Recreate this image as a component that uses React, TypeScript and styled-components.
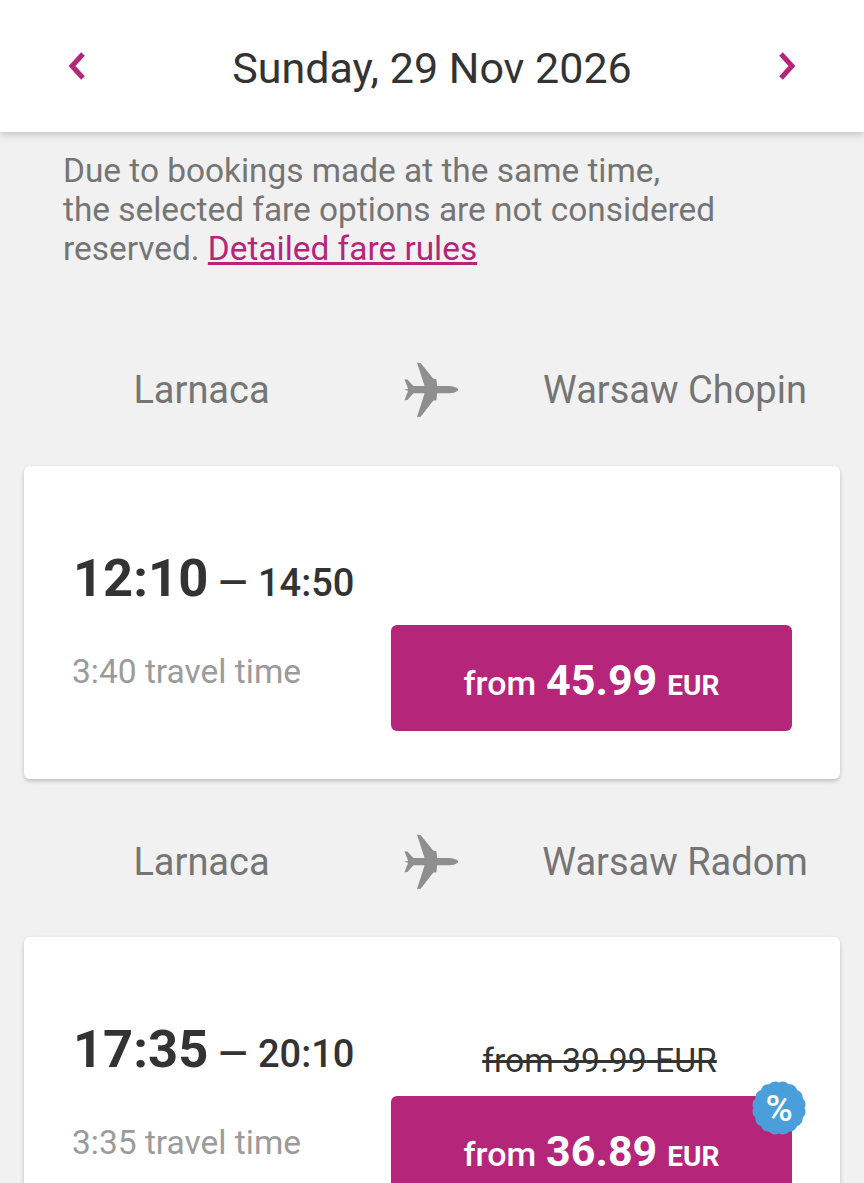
import React from "react";
import styled, { createGlobalStyle } from "styled-components";

const Global = createGlobalStyle`
  html, body { margin: 0; padding: 0; height: 1183px; overflow: hidden; background: #f1f1f1; }
  body { font-family: Roboto, "Liberation Sans", sans-serif; }
`;
const Page = styled.div`
  width: 864px;
  display: flex;
  flex-direction: column;
`;
const Header = styled.header`
  height: 132px;
  background: #fff;
  box-shadow: 0 2px 8px rgba(0, 0, 0, 0.22);
  display: flex;
  align-items: center;
  justify-content: space-between;
  padding: 0 66px;
  position: relative;
`;
const NavIcon = styled.svg`
  width: 20px;
  height: 30px;
  margin-top: -1px;
  fill: none;
  stroke: #b5267b;
  stroke-width: 5;
  stroke-linejoin: miter;
`;
const DateTitle = styled.h1`
  margin: 4px 0 0;
  font-size: 43px;
  font-weight: 400;
  color: #333;
`;
const Notice = styled.p`
  margin: 0;
  padding: 19px 63px 0;
  font-size: 33.4px;
  line-height: 39px;
  font-weight: 400;
  color: #757575;
`;
const RuleLink = styled.a`
  color: #b5267b;
  text-decoration: underline;
`;
const Route = styled.div<{ $top: number; $gap: number }>`
  display: grid;
  grid-template-columns: 403px 57px 1fr;
  align-items: center;
  height: 56px;
  margin-top: ${(p) => p.$top}px;
  margin-bottom: ${(p) => p.$gap}px;
  font-size: 38px;
  color: #757575;
`;
const City = styled.div<{ $right?: boolean }>`
  text-align: center;
  padding-left: ${(p) => (p.$right ? "26px" : "0")};
  white-space: nowrap;
`;
const Plane = styled.svg`
  width: 57px;
  height: 56px;
  fill: #8f8f8f;
`;
const Card = styled.section`
  margin: 0 24px;
  height: 313px;
  box-sizing: border-box;
  flex: none;
  background: #fff;
  border-radius: 6px;
  box-shadow: 0 2px 4px rgba(0, 0, 0, 0.22);
  display: flex;
  justify-content: space-between;
  padding: 0 48px 48px;
`;
const Times = styled.div`
  display: flex;
  flex-direction: column;
  padding-top: 77px;
  padding-left: 1px;
`;
const TimeRow = styled.div`
  display: flex;
  align-items: baseline;
  height: 70px;
  color: #333;
`;
const Depart = styled.span`
  font-size: 52.5px;
  font-weight: 700;
  line-height: 70px;
`;
const Arrive = styled.span`
  font-size: 38px;
  font-weight: 500;
  margin-left: 10px;
  word-spacing: 1px;
`;
const Travel = styled.div`
  margin-top: 39px;
  margin-left: -1px;
  font-size: 33.5px;
  line-height: 40px;
  color: #9b9b9b;
`;
const Fares = styled.div`
  width: 401px;
  display: flex;
  flex-direction: column;
  justify-content: flex-end;
  align-items: center;
`;
const OldPrice = styled.div`
  font-size: 33.7px;
  line-height: 40px;
  margin: 0 0 15px 16px;
  color: #333;
  text-decoration: line-through;
`;
const PriceButton = styled.button`
  position: relative;
  width: 401px;
  height: 106px;
  flex: none;
  border: 0;
  border-radius: 6px;
  background: #b5267b;
  color: #fff;
  font-family: inherit;
  display: flex;
  align-items: baseline;
  justify-content: center;
  padding: 30px 0 0;
  font-size: 34px;
  font-weight: 500;
`;
const Amount = styled.strong`
  font-size: 43px;
  font-weight: 700;
  margin: 0 10px;
`;
const Currency = styled.span`
  font-size: 28px;
  font-weight: 700;
`;
const Badge = styled.div`
  position: absolute;
  right: -14px;
  top: -15px;
  width: 54px;
  height: 54px;
  display: flex;
  align-items: center;
  justify-content: center;
  color: #fff;
  font-size: 37px;
  font-weight: 500;
`;
const BadgeShape = styled.svg`
  position: absolute;
  inset: 0;
  fill: #4a9fda;
`;
const BadgeText = styled.span`
  position: relative;
`;

const scallop = (() => {
  const n = 16;
  let d = "";
  for (let i = 0; i < n; i++) {
    const a0 = (i / n) * Math.PI * 2;
    const a1 = ((i + 0.5) / n) * Math.PI * 2;
    const a2 = ((i + 1) / n) * Math.PI * 2;
    const pt = (a: number, r: number) => `${(27 + r * Math.cos(a)).toFixed(2)} ${(27 + r * Math.sin(a)).toFixed(2)}`;
    if (i === 0) d += `M${pt(a0, 25.6)}`;
    d += `Q${pt(a1, 28.8)} ${pt(a2, 25.6)}`;
  }
  return d + "Z";
})();

const PlaneIcon = () => (
  <Plane viewBox="70 66 170 170" aria-hidden="true">
    <path d="M236 150C236 145 222 139 204 139L172 139L170 118L160 116L122 69L111 68L134 139L100 139L82 119L73 118L84 147L72 150L84 153L73 182L82 181L100 161L134 161L111 233L122 232L160 184L170 182L172 161L204 161C222 161 236 155 236 150Z" />
  </Plane>
);

const Flight = ({ dep, arr, travel, price, old }: { dep: string; arr: string; travel: string; price: string; old?: string }) => (
  <Card>
    <Times>
      <TimeRow>
        <Depart>{dep}</Depart>
        <Arrive>— {arr}</Arrive>
      </TimeRow>
      <Travel>{travel}</Travel>
    </Times>
    <Fares>
      {old && <OldPrice>from {old} EUR</OldPrice>}
      <PriceButton>
        from<Amount>{price}</Amount><Currency>EUR</Currency>
        {old && (
          <Badge>
            <BadgeShape viewBox="0 0 54 54"><path d={scallop} /></BadgeShape>
            <BadgeText>%</BadgeText>
          </Badge>
        )}
      </PriceButton>
    </Fares>
  </Card>
);

export default function App() {
  return (
    <Page>
      <Global />
      <Header>
        <NavIcon viewBox="0 0 20 30"><path d="M17 3L6 15L17 27" /></NavIcon>
        <DateTitle>Sunday, 29 Nov 2026</DateTitle>
        <NavIcon viewBox="0 0 20 30"><path d="M3 3L14 15L3 27" /></NavIcon>
      </Header>
      <Notice>
        Due to bookings made at the same time,<br />
        the selected fare options are not considered<br />
        reserved. <RuleLink>Detailed fare rules</RuleLink>
      </Notice>
      <Route $top={94} $gap={48}>
        <City>Larnaca</City>
        <PlaneIcon />
        <City $right>Warsaw Chopin</City>
      </Route>
      <Flight dep="12:10" arr="14:50" travel="3:40 travel time" price="45.99" />
      <Route $top={55} $gap={47}>
        <City>Larnaca</City>
        <PlaneIcon />
        <City $right>Warsaw Radom</City>
      </Route>
      <Flight dep="17:35" arr="20:10" travel="3:35 travel time" price="36.89" old="39.99" />
    </Page>
  );
}
